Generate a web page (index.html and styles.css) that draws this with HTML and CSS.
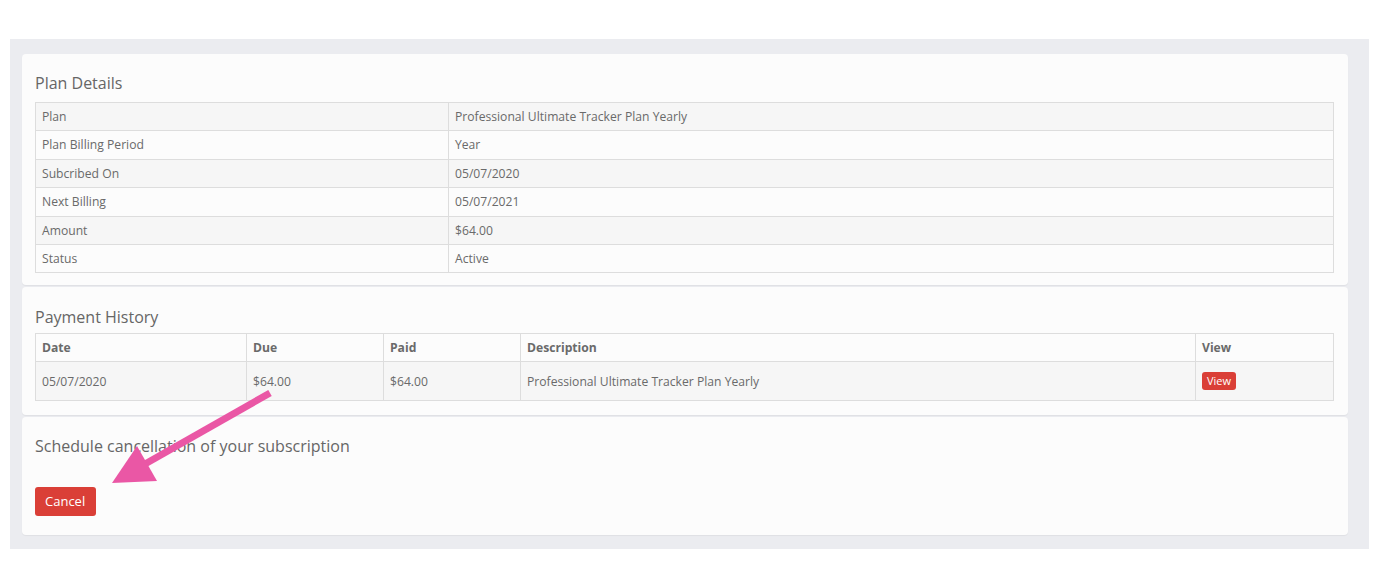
FILE: index.html
```html
<!DOCTYPE html>
<html lang="en">

<head>
    <meta charset="UTF-8">
    <meta name="viewport" content="width=device-width, initial-scale=1.0">
    <title>Subscription</title>
    <link rel="stylesheet" href="styles.css">
</head>

<body>
    <div class="page">
        <!-- Plan details -->
        <div class="panel panel-plan">
            <h3>Plan Details</h3>
            <table class="grid plan-table">
                <tr><td class="label">Plan</td><td>Professional Ultimate Tracker Plan Yearly</td></tr>
                <tr><td class="label">Plan Billing Period</td><td>Year</td></tr>
                <tr><td class="label">Subcribed On</td><td>05/07/2020</td></tr>
                <tr><td class="label">Next Billing</td><td>05/07/2021</td></tr>
                <tr><td class="label">Amount</td><td>$64.00</td></tr>
                <tr><td class="label">Status</td><td>Active</td></tr>
            </table>
        </div>

        <!-- Payment history -->
        <div class="panel panel-history">
            <h3>Payment History</h3>
            <table class="grid history-table">
                <thead>
                    <tr>
                        <th class="c-date">Date</th>
                        <th class="c-due">Due</th>
                        <th class="c-paid">Paid</th>
                        <th>Description</th>
                        <th class="c-view">View</th>
                    </tr>
                </thead>
                <tbody>
                    <tr>
                        <td>05/07/2020</td>
                        <td>$64.00</td>
                        <td>$64.00</td>
                        <td>Professional Ultimate Tracker Plan Yearly</td>
                        <td><button class="btn-view">View</button></td>
                    </tr>
                </tbody>
            </table>
        </div>

        <!-- Cancel -->
        <div class="panel panel-cancel">
            <h3>Schedule cancellation of your subscription</h3>
            <button class="btn-cancel">Cancel</button>
        </div>
    </div>

    <!-- annotation arrow -->
    <svg class="arrow" width="1390" height="576" viewBox="0 0 1390 576">
        <line x1="270" y1="393" x2="145" y2="464" stroke="#ea57a5" stroke-width="7" stroke-linecap="butt" />
        <polygon points="112,483 137,446 157,481" fill="#ea57a5" />
    </svg>
</body>

</html>
```

FILE: styles.css
```css
body {
    margin: 0;
    background-color: #ffffff;
    font-family: "Open Sans", "Liberation Sans", sans-serif;
    color: #6a6a6a;
}

.page {
    margin: 39px 0 0 10px;
    width: 1359px;
    height: 510px;
    box-sizing: border-box;
    padding: 15px 21px 14px 12px;
    background-color: #ebecf0;
    display: flex;
    flex-direction: column;
    gap: 2px;
}

.panel {
    background-color: #fcfcfc;
    border-radius: 4px;
    padding: 18px 14px 12px 13px;
    box-shadow: 0 1px 1px rgba(0, 0, 0, 0.05);
}

.panel h3 {
    margin: 0 0 8px 0;
    font-size: 16px;
    line-height: 22px;
    font-weight: 400;
    color: #666;
}

.panel-plan {
    height: 231px;
    box-sizing: border-box;
}

.panel-history {
    height: 128px;
    box-sizing: border-box;
    padding-top: 19px;
}

.panel-history h3 {
    margin-bottom: 5px;
}

.panel-cancel {
    flex: 1;
}

.grid {
    width: 100%;
    border-collapse: collapse;
    font-size: 12.15px;
}

.grid td,
.grid th {
    border: 1px solid #dddddd;
    padding: 5px 6px;
    line-height: 17.4px;
    text-align: left;
    color: #6a6a6a;
}

.grid th {
    font-weight: 700;
}

.plan-table tr:nth-child(odd) {
    background-color: #f6f6f6;
}

.plan-table .label {
    width: 400px;
}

.history-table tbody tr {
    background-color: #f6f6f6;
}

.history-table tbody td {
    height: 28px;
}

.c-date {
    width: 198px;
}

.c-due,
.c-paid {
    width: 124px;
}

.c-view {
    width: 125px;
}

.btn-view {
    font-family: "Open Sans", "Liberation Sans", sans-serif;
    font-size: 11px;
    line-height: 16px;
    padding: 1px 5px;
    color: #ffffff;
    background-color: #da3f37;
    border: none;
    border-radius: 3px;
}

.btn-cancel {
    display: block;
    margin-top: 30px;
    font-family: "Open Sans", "Liberation Sans", sans-serif;
    font-size: 13px;
    line-height: 17px;
    padding: 6px 11px 6px 10px;
    color: #ffffff;
    background-color: #da3f37;
    border: none;
    border-radius: 3px;
}

.arrow {
    position: absolute;
    top: 0;
    left: 0;
    pointer-events: none;
}
```
